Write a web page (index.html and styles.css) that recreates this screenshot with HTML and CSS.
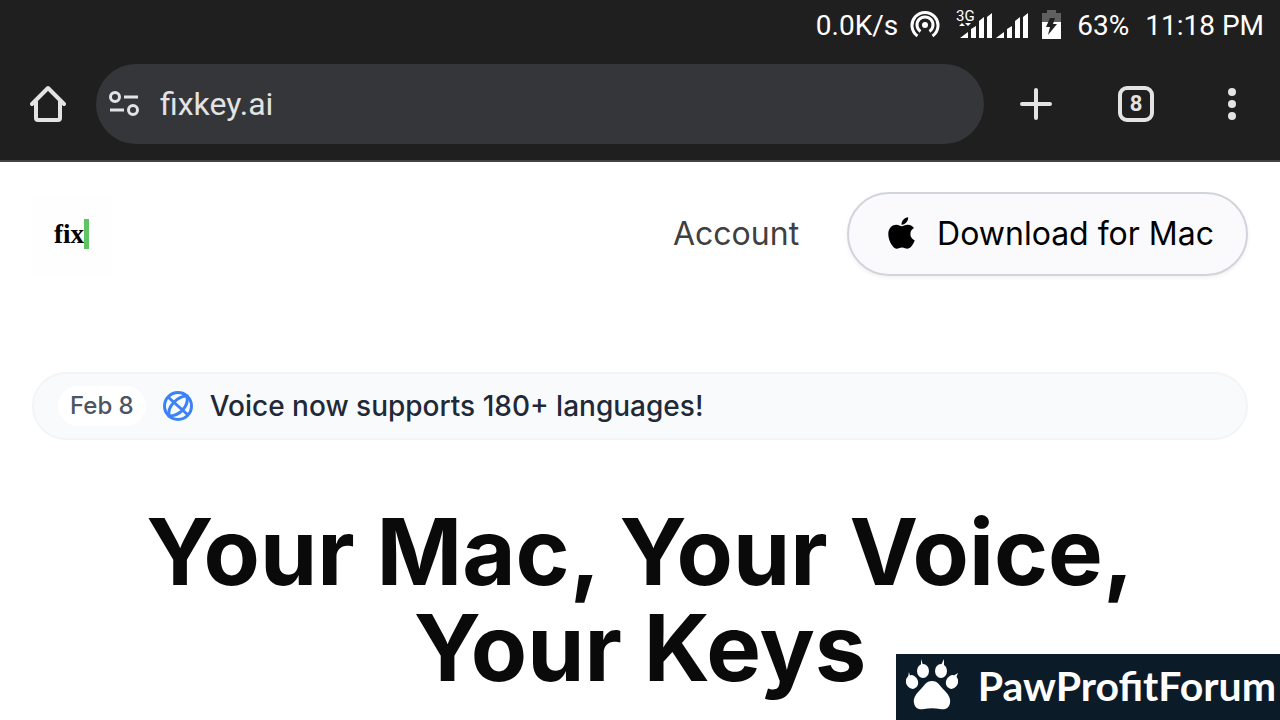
FILE: index.html
```html
<!DOCTYPE html>
<html lang="en">
<head>
	<meta charset="utf-8">
	<meta name="viewport" content="width=device-width, initial-scale=1">
	<title>Fixkey</title>
	<link rel="stylesheet" href="styles.css">
</head>
<body>
	<div class="browser">
		<div class="status">
			<span class="speed">0.0K/s</span>
			<svg class="hotspot" width="30" height="30" viewBox="0 0 30 30" fill="none" stroke="#fff" stroke-width="3">
				<circle cx="15" cy="15" r="3" fill="#fff" stroke="none"/>
				<path d="M10.5 21.5a8 8 0 1 1 9 0"/>
				<path d="M7.5 26a13 13 0 1 1 15 0"/>
			</svg>
			<svg class="signal" width="72" height="32" viewBox="0 0 72 32" fill="#fff">
				<text x="0" y="12" class="network">3G</text>
				<path d="M3 17l3-3 3 3zM9 14h6l-3 3z"/>
				<path d="M4 29l8-6v6zM15 20l5-3v12h-5zM23 12l5-4v21h-5zM31 8l5-4v25h-5z"/>
				<path d="M40 29l8-6v6zM51 20l5-3v12h-5zM59 12l5-4v21h-5zM67 8l5-4v25h-5z"/>
			</svg>
			<svg class="battery" width="19" height="29" viewBox="0 0 19 29">
				<path fill="#5f5f5f" d="M5 0h9v3h5v10H0V3h5z"/>
				<path fill="#fff" d="M0 12h19v17H0z"/>
				<path fill="#202020" d="M8 8h5l-2 6h4L6 25l2-8H4z"/>
			</svg>
			<span class="percent">63%</span>
			<span>11:18 PM</span>
		</div>
		<div class="toolbar">
			<button class="tool" type="button" aria-label="Home">
				<svg width="36" height="38" viewBox="0 0 36 38" fill="none" stroke="#e3e3e3" stroke-width="4" stroke-linecap="round" stroke-linejoin="round">
					<path d="M2 19L18 3l16 16M6 16v17q0 2 2 2h20q2 0 2-2V16"/>
				</svg>
			</button>
			<div class="address">
				<svg width="32" height="26" viewBox="0 0 32 26" fill="none" stroke="#e3e3e3" stroke-width="3">
					<circle cx="7" cy="6" r="4.5"/>
					<path d="M16 6h14M2 19h14"/>
					<circle cx="25" cy="19" r="4.5"/>
				</svg>
				<input type="text" class="url" value="fixkey.ai" aria-label="Address">
			</div>
			<button class="tool add" type="button" aria-label="New tab">
				<svg width="32" height="32" viewBox="0 0 32 32" stroke="#e3e3e3" stroke-width="4" stroke-linecap="round">
					<path d="M16 2v28M2 16h28"/>
				</svg>
			</button>
			<button class="tool" type="button" aria-label="Tabs"><span class="tabs">8</span></button>
			<button class="tool" type="button" aria-label="Menu">
				<svg width="8" height="32" viewBox="0 0 8 32" fill="#e3e3e3">
					<circle cx="4" cy="4" r="4"/>
					<circle cx="4" cy="16" r="4"/>
					<circle cx="4" cy="28" r="4"/>
				</svg>
			</button>
		</div>
	</div>

	<div class="page">
		<header class="header">
			<a class="logo" href="#">fix</a>
			<nav class="nav">
				<a class="account" href="#">Account</a>
				<a class="download" href="#">
					<svg width="27" height="36" viewBox="0 0 384 512">
						<path d="M318.7 268.7c-.2-36.7 16.4-64.4 50-84.8-18.8-26.9-47.2-41.7-84.7-44.6-35.5-2.8-74.3 20.7-88.5 20.7-15 0-49.4-19.7-76.4-19.7C63.3 141.2 4 184.8 4 273.5q0 39.3 14.4 81.2c12.8 36.7 59 126.7 107.2 125.2 25.2-.6 43-17.9 75.8-17.9 31.8 0 48.3 17.9 76.4 17.9 48.6-.7 90.4-82.5 102.6-119.3-65.2-30.7-61.7-90-61.7-91.9zm-56.6-164.2c27.3-32.4 24.8-61.9 24-72.5-24.1 1.4-52 16.4-67.9 34.9-17.5 19.8-27.8 44.3-25.6 71.9 26.1 2 49.9-11.4 69.5-34.3z"/>
					</svg>
					Download for Mac
				</a>
			</nav>
		</header>

		<a class="news" href="#">
			<span class="date">Feb 8</span>
			<svg width="32" height="32" viewBox="0 0 32 32" fill="none" stroke="#3b82f6" stroke-width="3">
				<circle cx="16" cy="16" r="13.5"/>
				<path d="M6 7l20 18M25 6C16 6 5 16 7 26C18 26 27 16 25 6z"/>
			</svg>
			<span>Voice now supports 180+ languages!</span>
		</a>

		<h1>Your Mac, Your Voice, Your Keys</h1>
	</div>

	<div class="forum">
		<svg width="52" height="52" viewBox="0 0 52 52" fill="#fff">
			<path d="M26 22c6 0 8 5 12 9 4 4 7 8 6 13-1 6-6 7-10 6-5-1-11-1-16 0-4 1-9 0-10-6-1-5 2-9 6-13 4-4 6-9 12-9z"/>
			<ellipse cx="6" cy="23" rx="6" ry="7" transform="rotate(-20 6 23)"/>
			<ellipse cx="17" cy="12" rx="6" ry="7"/>
			<ellipse cx="35" cy="12" rx="6" ry="7"/>
			<ellipse cx="46" cy="23" rx="6" ry="7" transform="rotate(20 46 23)"/>
			<path d="M15 6l0-6 2 6zM35 6l3-6v6zM2 18l1-5 1 4zM47 17l5-3-2 5z"/>
		</svg>
		<span>PawProfitForum</span>
	</div>
</body>
</html>
```

FILE: styles.css
```css
*{
	box-sizing: border-box;
}
body{
	margin: 0;
	background-color: #fff;
	font-family: Inter, "Liberation Sans", sans-serif;
}
a{
	text-decoration: none;
}
svg{
	display: block;
	flex-shrink: 0;
}
.browser{
	background-color: #1f1f1f;
	border-bottom: 2px solid #444;
	font-family: Roboto, sans-serif;
}
.status{
	display: flex;
	justify-content: flex-end;
	align-items: center;
	height: 48px;
	padding: 2px 16px 0 0;
	color: #fff;
	font-size: 28px;
}
.hotspot{
	margin-left: 12px;
}
.signal{
	margin: 0 14px 0 16px;
}
.battery{
	margin-bottom: 2px;
}
.network{
	font-size: 15px;
}
.percent{
	margin: 0 16px;
}
.toolbar{
	display: flex;
	align-items: center;
	padding: 16px 0;
}
.tool{
	display: flex;
	justify-content: center;
	align-items: center;
	width: 96px;
	height: 80px;
	padding: 0;
	border: 0;
	background: none;
	color: #e3e3e3;
	font-family: inherit;
}
.add{
	margin: 0 4px;
}
.address{
	display: flex;
	flex: 1;
	align-items: center;
	gap: 20px;
	height: 80px;
	padding: 0 12px;
	border-radius: 40px;
	background-color: #35363a;
}
.url{
	flex: 1;
	min-width: 0;
	padding: 0;
	border: 0;
	outline: 0;
	background: none;
	color: #e3e3e3;
	font-family: inherit;
	font-size: 32px;
}
.tabs{
	width: 36px;
	height: 36px;
	border: 4px solid #e3e3e3;
	border-radius: 9px;
	font-size: 22px;
	font-weight: bold;
	line-height: 28px;
}
.page{
	padding: 30px 32px 24px;
}
.header{
	display: flex;
	justify-content: space-between;
	align-items: center;
}
.logo{
	display: flex;
	align-items: center;
	width: 80px;
	height: 80px;
	padding-left: 22px;
	background-color: #fefefe;
	color: #000;
	font-family: "Liberation Serif", serif;
	font-size: 27px;
	font-weight: bold;
}
.logo::after{
	content: "";
	width: 5px;
	height: 30px;
	background-color: #5fc463;
}
.nav{
	display: flex;
	align-items: center;
	gap: 48px;
	font-size: 32px;
}
.account{
	padding-bottom: 2px;
	color: #404040;
}
.download{
	display: flex;
	align-items: center;
	gap: 22px;
	height: 84px;
	padding: 0 32px 2px 39px;
	border: 2px solid #d1d5db;
	border-radius: 42px;
	background-color: #fafafc;
	box-shadow: 0 2px 4px rgba(0,0,0,0.06);
	color: #000;
}
.news{
	display: flex;
	align-items: center;
	gap: 16px;
	height: 68px;
	margin-top: 96px;
	padding: 0 24px;
	border: 2px solid #f3f4f6;
	border-radius: 34px;
	background-color: #f9fafc;
	color: #1f2937;
	font-size: 28px;
	font-weight: 500;
}
.date{
	padding: 0 12px;
	border-radius: 20px;
	background-color: #fff;
	color: #4b5563;
	font-size: 24px;
	line-height: 40px;
}
h1{
	margin: 64px 64px 0;
	color: #0a0a0a;
	font-size: 92px;
	font-weight: bold;
	line-height: 96px;
	text-align: center;
}
.forum{
	position: fixed;
	right: 0;
	bottom: 0;
	display: flex;
	align-items: center;
	gap: 20px;
	height: 66px;
	padding: 0 4px 4px 10px;
	background-color: #0b1b27;
	color: #fff;
	font-family: Lato, sans-serif;
	font-size: 41px;
	font-weight: bold;
}
```
